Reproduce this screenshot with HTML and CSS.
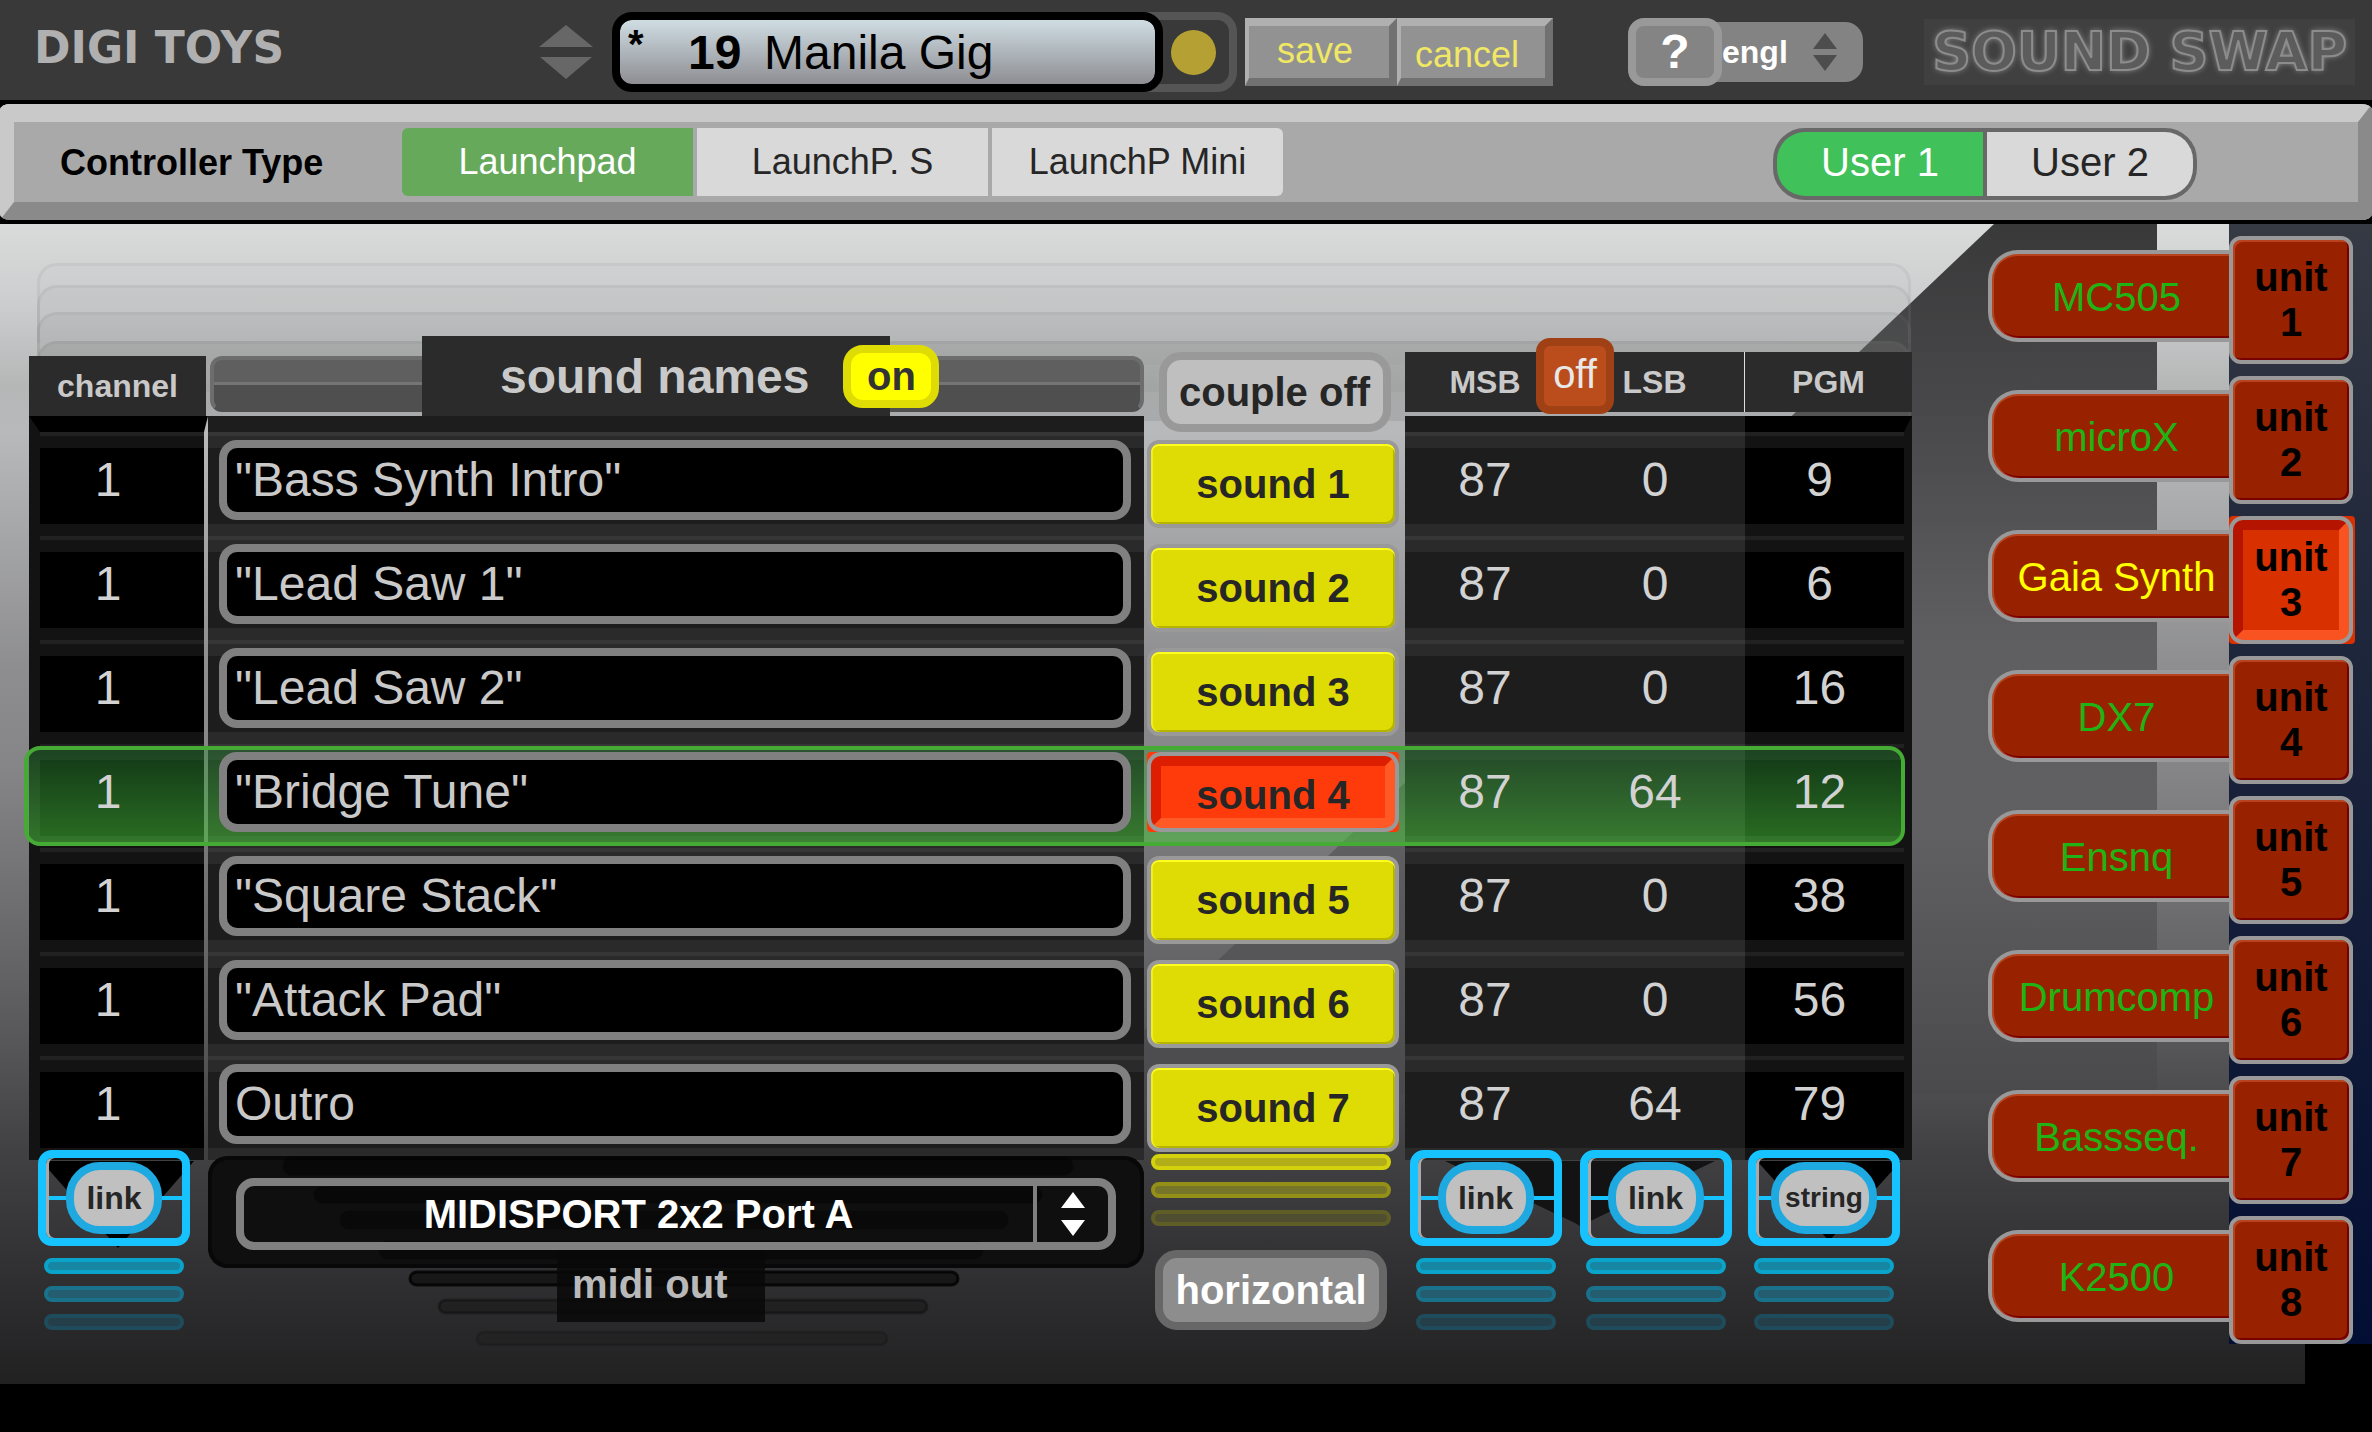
FILE: index.html
```html
<!DOCTYPE html>
<html lang="en">
<head>
  <meta charset="UTF-8" />
  <meta name="viewport" content="width=device-width, initial-scale=1" />
  <title>Sound Swap</title>
  <link rel="stylesheet" href="styles.css">
</head>
<body>
  <header class="topbar">
    <div class="brand">DIGI TOYS</div>

    <div class="stepper">
      <button type="button" aria-label="Previous preset"><svg viewBox="0 0 54 22"><path d="M27 0L54 22H0z"/></svg></button>
      <button type="button" aria-label="Next preset"><svg viewBox="0 0 54 22"><path d="M1 0H53L27 22z"/></svg></button>
    </div>

    <div class="preset">
      <div class="display">
        <span class="dirty">*</span>
        <label class="preset-no" for="presetName">19</label>
        <input type="text" id="presetName" value="Manila Gig">
      </div>
      <span class="lamp"></span>
    </div>

    <div class="actions">
      <button type="button" class="save">save</button>
      <button type="button" class="cancel">cancel</button>
    </div>

    <div class="help">
      <button type="button" class="help-btn" aria-label="Help">?</button>
      <div class="lang">
        <select aria-label="Language">
          <option>engl</option>
        </select>
        <svg viewBox="0 0 24 38"><path d="M12 0L24 16H0zM0 22H24L12 38z"/></svg>
      </div>
    </div>

    <div class="logo">SOUND SWAP</div>
  </header>

  <div class="toolbar">
    <div class="toolbar-inner">
      <span class="toolbar-label" id="typeLabel">Controller Type</span>
      <div class="segments" role="group" aria-labelledby="typeLabel">
        <button type="button" class="active">Launchpad</button>
        <button type="button">LaunchP. S</button>
        <button type="button">LaunchP Mini</button>
      </div>
      <div class="users" role="group" aria-label="User">
        <button type="button" class="active">User 1</button>
        <button type="button">User 2</button>
      </div>
    </div>
  </div>

  <main class="stage">
    <section class="board">
      <div class="stack stack-1"></div>
      <div class="stack stack-2"></div>
      <div class="stack stack-3"></div>
      <div class="stack stack-4"></div>

      <table class="sounds">
        <colgroup>
          <col class="col-channel"><col><col class="col-sound"><col class="col-msb"><col class="col-lsb"><col class="col-pgm">
        </colgroup>
        <thead>
          <tr>
            <th><div class="head head-channel">channel</div></th>
            <th>
              <div class="names-head">
                <div class="names-title">sound names <button type="button" class="on-btn">on</button></div>
              </div>
            </th>
            <th><button type="button" class="couple-btn">couple off</button></th>
            <th><div class="head head-bank">MSB</div></th>
            <th class="bank-cell"><div class="head head-bank head-lsb">LSB</div><button type="button" class="off-btn">off</button></th>
            <th><div class="head head-bank head-pgm">PGM</div></th>
          </tr>
        </thead>
        <tbody>
          <tr>
            <td class="channel"><span class="num">1</span></td>
            <td class="name"><input type="text" aria-label="Sound name 1" value="&quot;Bass Synth Intro&quot;"></td>
            <td class="sound"><button type="button">sound 1</button></td>
            <td class="bank"><span class="num">87</span></td>
            <td class="bank"><span class="num">0</span></td>
            <td class="pgm"><span class="num">9</span></td>
          </tr>
          <tr>
            <td class="channel"><span class="num">1</span></td>
            <td class="name"><input type="text" aria-label="Sound name 2" value="&quot;Lead Saw 1&quot;"></td>
            <td class="sound"><button type="button">sound 2</button></td>
            <td class="bank"><span class="num">87</span></td>
            <td class="bank"><span class="num">0</span></td>
            <td class="pgm"><span class="num">6</span></td>
          </tr>
          <tr>
            <td class="channel"><span class="num">1</span></td>
            <td class="name"><input type="text" aria-label="Sound name 3" value="&quot;Lead Saw 2&quot;"></td>
            <td class="sound"><button type="button">sound 3</button></td>
            <td class="bank"><span class="num">87</span></td>
            <td class="bank"><span class="num">0</span></td>
            <td class="pgm"><span class="num">16</span></td>
          </tr>
          <tr class="selected">
            <td class="channel"><span class="num">1</span></td>
            <td class="name"><input type="text" aria-label="Sound name 4" value="&quot;Bridge Tune&quot;"></td>
            <td class="sound"><button type="button"><span>sound 4</span></button></td>
            <td class="bank"><span class="num">87</span></td>
            <td class="bank"><span class="num">64</span></td>
            <td class="pgm"><span class="num">12</span></td>
          </tr>
          <tr>
            <td class="channel"><span class="num">1</span></td>
            <td class="name"><input type="text" aria-label="Sound name 5" value="&quot;Square Stack&quot;"></td>
            <td class="sound"><button type="button">sound 5</button></td>
            <td class="bank"><span class="num">87</span></td>
            <td class="bank"><span class="num">0</span></td>
            <td class="pgm"><span class="num">38</span></td>
          </tr>
          <tr>
            <td class="channel"><span class="num">1</span></td>
            <td class="name"><input type="text" aria-label="Sound name 6" value="&quot;Attack Pad&quot;"></td>
            <td class="sound"><button type="button">sound 6</button></td>
            <td class="bank"><span class="num">87</span></td>
            <td class="bank"><span class="num">0</span></td>
            <td class="pgm"><span class="num">56</span></td>
          </tr>
          <tr>
            <td class="channel"><span class="num">1</span></td>
            <td class="name"><input type="text" aria-label="Sound name 7" value="Outro"></td>
            <td class="sound"><button type="button">sound 7</button></td>
            <td class="bank"><span class="num">87</span></td>
            <td class="bank"><span class="num">64</span></td>
            <td class="pgm"><span class="num">79</span></td>
          </tr>
        </tbody>
      </table>

      <div class="footer">
        <div class="link-col">
          <svg class="arrow" viewBox="0 0 179 87" preserveAspectRatio="none"><path d="M12 0H165L89 87z" fill="#000"/></svg>
          <div class="link-box"><button type="button">link</button></div>
          <div class="bar cyan-1"></div>
          <div class="bar cyan-2"></div>
          <div class="bar cyan-3"></div>
        </div>

        <div class="midi">
          <div class="midi-panel">
            <div class="midi-select">
              <select id="midiOut">
                <option>MIDISPORT 2x2 Port A</option>
              </select>
              <span class="midi-arrows"><svg viewBox="0 0 24 44"><path d="M12 0L24 16H0zM0 28H24L12 44z"/></svg></span>
            </div>
          </div>
          <svg class="echo" viewBox="0 0 936 190" preserveAspectRatio="none">
            <g fill="#000" stroke="#000" stroke-width="3">
              <rect x="76" y="2" width="788" height="16" rx="8" opacity=".4"/>
              <rect x="107" y="32" width="726" height="14" rx="7" opacity=".4"/>
              <rect x="133" y="56" width="666" height="16" rx="8" opacity=".35"/>
              <rect x="172" y="86" width="602" height="16" rx="8" opacity=".35"/>
              <rect x="202" y="116" width="548" height="13" rx="7" fill-opacity=".5" stroke-opacity=".8"/>
              <rect x="231" y="144" width="488" height="13" rx="7" fill-opacity=".25" stroke-opacity=".3"/>
              <rect x="269" y="176" width="410" height="13" rx="7" fill-opacity=".1" stroke-opacity=".15"/>
            </g>
          </svg>
          <label class="midi-label" for="midiOut">midi out</label>
        </div>

        <div class="couple-col">
          <div class="bar yellow-1"></div>
          <div class="bar yellow-2"></div>
          <div class="bar yellow-3"></div>
          <button type="button" class="horizontal-btn">horizontal</button>
        </div>

        <div class="link-col">
          <svg class="arrow" viewBox="0 0 170 87" preserveAspectRatio="none"><path d="M40 0H170V62z" fill="#131313"/></svg>
          <div class="link-box"><button type="button">link</button></div>
          <div class="bar cyan-1"></div>
          <div class="bar cyan-2"></div>
          <div class="bar cyan-3"></div>
        </div>
        <div class="link-col">
          <svg class="arrow" viewBox="0 0 170 87" preserveAspectRatio="none"><path d="M0 0H140L5 65L0 62z" fill="#131313"/></svg>
          <div class="link-box"><button type="button">link</button></div>
          <div class="bar cyan-1"></div>
          <div class="bar cyan-2"></div>
          <div class="bar cyan-3"></div>
        </div>
        <div class="link-col">
          <svg class="arrow" viewBox="0 0 167 87" preserveAspectRatio="none"><path d="M12 0H156L84 80z" fill="#000"/></svg>
          <div class="link-box"><button type="button" class="string">string</button></div>
          <div class="bar cyan-1"></div>
          <div class="bar cyan-2"></div>
          <div class="bar cyan-3"></div>
        </div>
      </div>
    </section>

    <ul class="rack">
      <li><button type="button" class="device">MC505</button><button type="button" class="unit"><span>unit<br>1</span></button></li>
      <li><button type="button" class="device">microX</button><button type="button" class="unit"><span>unit<br>2</span></button></li>
      <li class="active"><button type="button" class="device">Gaia Synth</button><button type="button" class="unit"><span>unit<br>3</span></button></li>
      <li><button type="button" class="device">DX7</button><button type="button" class="unit"><span>unit<br>4</span></button></li>
      <li><button type="button" class="device">Ensnq</button><button type="button" class="unit"><span>unit<br>5</span></button></li>
      <li><button type="button" class="device">Drumcomp</button><button type="button" class="unit"><span>unit<br>6</span></button></li>
      <li><button type="button" class="device">Bassseq.</button><button type="button" class="unit"><span>unit<br>7</span></button></li>
      <li><button type="button" class="device">K2500</button><button type="button" class="unit"><span>unit<br>8</span></button></li>
    </ul>
  </main>
</body>
</html>
```
FILE: styles.css
```css
* { box-sizing: border-box; }
body {
  margin: 0;
  background: #000;
  color: #000;
  font-family: "Liberation Sans", Arial, sans-serif;
}
button, input, select {
  margin: 0;
  padding: 0;
  border: none;
  background: none;
  color: inherit;
  font: inherit;
}
button { cursor: pointer; }
select { appearance: none; }
svg { display: block; }

/* top bar */
.topbar {
  display: flex;
  align-items: center;
  padding: 12px 17px 8px 34px;
  background: #393939;
}
.brand {
  width: 505px;
  padding-bottom: 8px;
  font-family: "DejaVu Sans", sans-serif;
  font-weight: bold;
  font-size: 44px;
  line-height: 48px;
  color: #b0b0b0;
}
.stepper {
  display: flex;
  flex-direction: column;
  gap: 10px;
  width: 54px;
  margin-right: 19px;
}
.stepper svg {
  width: 54px;
  height: 22px;
  fill: #676767;
}
.preset {
  display: flex;
  width: 625px;
  height: 80px;
  border: 8px solid #555;
  border-radius: 20px;
  align-items: center;
  margin-right: 8px;
}
.display {
  display: flex;
  align-items: center;
  width: 551px;
  height: 80px;
  margin: -8px 8px -8px -8px;
  padding-left: 8px;
  border: 8px solid #000;
  border-radius: 20px;
  background: linear-gradient(#cfdde3, #8e8e93) padding-box;
  font-size: 48px;
}
.dirty {
  width: 60px;
  height: 60px;
  font-size: 40px;
  font-weight: bold;
}
.preset-no {
  width: 76px;
  font-weight: bold;
}
.display input {
  flex: 1;
  min-width: 0;
}
.lamp {
  width: 45px;
  height: 45px;
  border-radius: 50%;
  background: #b5a133;
}
.actions {
  display: flex;
  width: 308px;
  margin-right: 75px;
}
.actions button {
  flex: 1;
  height: 68px;
  border: 8px solid;
  border-left-width: 4px;
  border-color: #b0b0b0 #717171 #717171 #b0b0b0;
  background: #929292;
  font-size: 36px;
  line-height: 40px;
  color: #f0e765;
}
.actions .save {
  padding: 0 8px 2px 0;
}
.actions .cancel {
  padding: 6px 12px 0 0;
}
.help {
  display: flex;
  align-items: center;
}
.help-btn {
  position: relative;
  width: 94px;
  height: 68px;
  border: 8px solid #999;
  border-radius: 16px;
  background: #848484;
  color: #fff;
  font-weight: bold;
  font-size: 48px;
  line-height: 48px;
}
.lang {
  display: flex;
  align-items: center;
  width: 163px;
  height: 60px;
  margin-left: -22px;
  padding: 0 26px 0 22px;
  border-radius: 18px;
  background: #838383;
  color: #fff;
}
.lang select {
  flex: 1;
  min-width: 0;
  font-weight: bold;
  font-size: 32px;
  height: 44px;
}
.lang svg {
  width: 24px;
  height: 38px;
  fill: #4d4d4d;
}
.logo {
  margin-left: auto;
  padding: 0 8px;
  background: #404040;
  font-family: "DejaVu Sans", sans-serif;
  font-weight: bold;
  font-size: 54px;
  line-height: 66px;
  color: #5c5c5c;
  -webkit-text-stroke: 2px #8c8c8c;
  text-shadow: 0 0 6px #9a9a9a;
}

/* controller toolbar */
.toolbar {
  border: solid #000;
  border-width: 4px 0;
  border-radius: 10px;
  overflow: hidden;
}
.toolbar-inner {
  display: flex;
  align-items: flex-start;
  padding: 6px 161px 2px 46px;
  border: solid;
  border-width: 18px 14px;
  border-color: #c9c9c9 #8a8a8a #8a8a8a #c9c9c9;
  background: #a9a9a9;
}
.toolbar-label {
  width: 342px;
  font-weight: bold;
  font-size: 36px;
  line-height: 70px;
}
.segments {
  display: flex;
  gap: 4px;
}
.segments button {
  width: 291px;
  height: 68px;
  background: #d9d9d9;
  color: #262626;
  font-size: 36px;
}
.segments button:first-child { border-radius: 6px 0 0 6px; }
.segments button:last-child { border-radius: 0 6px 6px 0; }
.segments .active {
  background: #67a95b;
  color: #fff;
}
.users {
  display: flex;
  gap: 4px;
  width: 424px;
  height: 72px;
  margin-left: auto;
  border: 4px solid #686868;
  border-radius: 32px;
  background: #686868;
  overflow: hidden;
}
.users button {
  flex: 1;
  background: #d9d9d9;
  color: #262626;
  font-size: 40px;
  padding-bottom: 4px;
}
.users .active {
  background: #40c159;
  color: #fff;
}

/* stage */
.stage {
  position: relative;
  z-index: 0;
  display: flex;
  gap: 76px;
  padding: 12px 17px 40px 29px;
  background:
    linear-gradient(#363a43, #242b3d 25%, #020e33) right top / 143px calc(100% - 40px) no-repeat,
    linear-gradient(#d9dbda, #cccdce 7%, #b5b7b7 14%, #b8b9bb 18%, #8e8e90 38%, #858588 47%, #58585a 70%, #414144 80%, #212122) left top / calc(100% - 67px) 100% no-repeat;
}
.stage::before {
  content: "";
  position: absolute;
  z-index: -1;
  top: 0;
  right: 215px;
  width: 1080px;
  height: 870px;
  background: linear-gradient(#3a393a, #4b4b4d 25%, #5f5f61 48%, #606062 70%, #4a4a4d);
  clip-path: polygon(917px 0, 100% 0, 100% 100%, 0 100%);
}
.board {
  position: relative;
  flex: 1;
  min-width: 0;
  margin-top: 100px;
}
.stack {
  position: absolute;
  z-index: -1;
  left: 8px;
  right: 1px;
  height: 80px;
  border: 3px solid rgba(120, 122, 122, .1);
  border-bottom: none;
  border-radius: 20px 20px 0 0;
}
.stack-1 { top: -73px; background: rgba(125, 128, 128, .02); }
.stack-2 { top: -51px; background: rgba(125, 125, 125, .06); }
.stack-3 { top: -24px; background: rgba(125, 125, 125, .1); }
.stack-4 { top: 5px; background: rgba(125, 125, 125, .22); }

/* sound table */
.sounds {
  width: 100%;
  table-layout: fixed;
  border-collapse: separate;
  border-spacing: 0;
}
.col-channel { width: 179px; }
.col-sound { width: 261px; }
.col-msb, .col-lsb { width: 170px; }
.col-pgm { width: 167px; }
.sounds th {
  height: 80px;
  padding: 0;
  vertical-align: bottom;
}
.head {
  height: 60px;
  background: #2b2b2b;
  color: #c9c9c9;
  font-size: 32px;
  line-height: 60px;
}
.head-channel { margin-right: 2px; }
.head-bank {
  margin-bottom: 4px;
  padding-right: 10px;
}
.head-lsb { border-right: 1px solid #ddd; }
.head-pgm { padding-right: 0; }
.names-head {
  position: relative;
  height: 80px;
}
.names-head::before {
  content: "";
  position: absolute;
  inset: 20px 0 4px 2px;
  border: 4px solid #6d6d6d;
  border-bottom-color: #4f4f4f;
  border-radius: 12px;
  background: linear-gradient(#5f5f5f 22px, #757575 22px, #757575 25px, #4f4f4f 25px);
}
.names-title {
  position: relative;
  display: flex;
  align-items: center;
  gap: 34px;
  width: 468px;
  height: 80px;
  margin-left: 214px;
  padding-left: 78px;
  background: #2b2b2b;
  color: #c9c9c9;
  font-size: 48px;
  white-space: nowrap;
}
.on-btn {
  flex: none;
  width: 96px;
  height: 63px;
  border: 8px solid #dedb05;
  border-radius: 20px;
  background: #ff0;
  color: #333;
  font-size: 40px;
  line-height: 44px;
}
.couple-btn, .horizontal-btn {
  width: 232px;
  height: 80px;
  border: 8px solid #999;
  border-radius: 22px;
  background: #bfbfbf;
  color: #262626;
  font-weight: bold;
  font-size: 40px;
  white-space: nowrap;
}
.couple-btn {
  position: relative;
  display: block;
  margin: 0 auto -16px;
}
.bank-cell { position: relative; }
.off-btn {
  position: absolute;
  left: -39px;
  top: 2px;
  width: 78px;
  height: 76px;
  border: 8px solid #a04015;
  border-radius: 14px;
  background: #bb4d1c;
  color: #e8e8e8;
  font-size: 40px;
  font-weight: normal;
  padding-bottom: 4px;
}
.sounds td {
  height: 104px;
  padding: 8px 0;
  vertical-align: top;
  text-align: center;
}
.sounds tbody tr { position: relative; }
.sounds .channel, .sounds .pgm {
  background: linear-gradient(#212121 4px, #131313 4px, #131313 16px, #000 16px, #000 92px, #131313 92px) padding-box;
}
.sounds .channel {
  border-left: 11px solid #131313;
  border-right: 4px solid transparent;
}
.sounds .pgm { border-right: 8px solid #131313; }
.sounds .name, .sounds .bank {
  background: linear-gradient(#363636 4px, #2a2a2a 4px, #2a2a2a 16px, #1d1d1d 16px, #1d1d1d 92px, #2a2a2a 92px) padding-box;
}
.sounds tbody tr:first-child td { border-top: 16px solid transparent; }
.sounds tbody tr:first-child .channel,
.sounds tbody tr:first-child .pgm { border-top-color: #000; }
.sounds tbody tr:first-child .name,
.sounds tbody tr:first-child .bank { border-top-color: #1d1d1d; }
.num {
  position: relative;
  z-index: 1;
  display: block;
  padding-right: 10px;
  color: #d2d2d2;
  font-size: 48px;
  line-height: 80px;
}
.channel .num { padding-right: 28px; }
.sounds .name {
  padding-left: 11px;
  padding-right: 13px;
}
.name input {
  position: relative;
  z-index: 1;
  display: block;
  width: 100%;
  height: 80px;
  padding: 0 8px 2px;
  border: 8px solid #808080;
  border-radius: 18px;
  background: #000;
  color: #c9c9c9;
  font-size: 48px;
}
.sound button {
  position: relative;
  z-index: 1;
  display: block;
  width: 252px;
  height: 88px;
  margin-left: 3px;
  border: 4px solid #999;
  border-radius: 12px;
  background: #dedb05;
  box-shadow: inset 0 2px #ffff1f, inset 2px 0 #f2ef12, inset -2px -2px #b7b400;
  color: #262626;
  font-weight: bold;
  font-size: 40px;
}
/* spans the whole row, the row is its containing block */
.selected .channel::before {
  content: "";
  position: absolute;
  inset: 2px 7px 2px -5px;
  border: 4px solid #45ab34;
  border-radius: 16px;
  background: linear-gradient(rgba(45, 140, 57, .4), rgba(76, 198, 62, .55));
}
.selected .sound button {
  height: 80px;
  border: none;
  border-radius: 4px;
  background: #ff3b0b;
  box-shadow: none;
}
.selected .sound button::before {
  content: "";
  position: absolute;
  inset: 0;
  border: 4px solid #999;
  border-radius: 14px;
}
.selected .sound span {
  display: block;
  height: 72px;
  margin: 0 4px;
  border: 10px solid;
  border-radius: 8px;
  border-color: #de1e00 #ff5a26 #ff5a26 #de1e00;
  line-height: 58px;
}

/* row under the table */
.footer {
  position: relative;
  display: grid;
  grid-template-columns: 179px 1fr 261px 170px 170px 167px;
  align-items: start;
  margin-top: -10px;
}
.link-col {
  position: relative;
  display: flex;
  flex-direction: column;
  align-items: center;
  gap: 12px;
  padding-right: 9px;
}
.arrow {
  position: absolute;
  top: 11px;
  left: 0;
  width: 100%;
  height: 87px;
}
.link-box {
  position: relative;
  display: flex;
  align-items: center;
  justify-content: center;
  width: 152px;
  height: 96px;
  border: 8px solid #17c3ff;
  border-radius: 14px;
  background: linear-gradient(#17c3ff, #17c3ff) center / 100% 4px no-repeat;
  box-shadow: inset 3px 0 #aaa;
}
.link-box button {
  width: 96px;
  height: 72px;
  border: 8px solid #1ea9e1;
  border-radius: 34px;
  background: #c0c0c0;
  color: #262626;
  font-weight: bold;
  font-size: 32px;
}
.link-box .string {
  width: 106px;
  font-size: 28px;
}
.bar {
  width: 140px;
  height: 16px;
  border: 4px solid;
  border-radius: 8px;
}
.cyan-1 { background: #1786a3; border-color: #0aa3c9; }
.cyan-2 { background: #235d6f; border-color: #1a718b; }
.cyan-3 { background: #253f4a; border-color: #1f4c5c; }
.couple-col {
  display: flex;
  flex-direction: column;
  gap: 12px;
  align-items: center;
  padding: 4px 7px 0 0;
}
.couple-col .bar { width: 240px; }
.yellow-1 { background: #b2ae1a; border-color: #d4d10d; }
.yellow-2 { background: #77752a; border-color: #949017; }
.yellow-3 { background: #504e30; border-color: #605e27; }
.horizontal-btn {
  margin-top: 12px;
  border-color: #676767;
  background: #8d8d8d;
  color: #fff;
}
.midi {
  position: relative;
  margin-top: 6px;
}
.midi-panel {
  padding: 22px 28px 18px;
  border-radius: 20px;
  background: #0f0f0f;
  box-shadow: inset 0 0 0 4px #080808;
}
.echo {
  position: absolute;
  top: 0;
  left: 0;
  width: 100%;
  height: 190px;
}
.midi-select {
  position: relative;
  z-index: 1;
  display: flex;
  height: 72px;
  border: 8px solid #808080;
  border-radius: 18px;
  color: #fff;
}
.midi-select select {
  flex: 1;
  min-width: 0;
  font-weight: bold;
  font-size: 40px;
  text-align: center;
  text-align-last: center;
}
.midi-arrows {
  display: flex;
  align-items: center;
  justify-content: center;
  width: 75px;
  border-left: 4px solid #808080;
}
.midi-arrows svg {
  width: 24px;
  height: 44px;
  fill: #fff;
}
.midi-label {
  position: relative;
  display: block;
  width: 208px;
  height: 72px;
  margin: -18px auto 0 349px;
  background: rgba(8, 8, 8, .85);
  color: #b9b9b9;
  font-weight: bold;
  font-size: 40px;
  line-height: 68px;
  padding-left: 15px;
}

/* unit rack */
.rack {
  display: flex;
  flex-direction: column;
  gap: 12px;
  width: 367px;
  margin: 0;
  padding: 0;
  list-style: none;
}
.rack li {
  display: flex;
  align-items: flex-start;
  height: 128px;
}
.device {
  width: 241px;
  height: 92px;
  margin-top: 14px;
  padding: 2px 0 0 12px;
  border: 4px solid #999;
  border-right: none;
  border-radius: 30px 0 0 30px;
  background: #982200;
  box-shadow: inset 0 2px #b9431f, inset 2px 0 #b9431f, inset 0 -2px #780000;
  color: #1fb414;
  font-size: 40px;
  white-space: nowrap;
}
.unit {
  position: relative;
  width: 124px;
  height: 128px;
  border: 4px solid #999;
  border-radius: 12px;
  background: #982200;
  box-shadow: inset 2px 2px #b9431f, inset -2px -2px #780000;
  font-weight: bold;
  font-size: 40px;
  line-height: 45px;
}
.active .device { color: #ff0; }
.active .unit {
  width: 126px;
  border: none;
  border-radius: 4px;
  background: #d93000;
  box-shadow: none;
}
.active .unit::before {
  content: "";
  position: absolute;
  inset: 0 2px 0 0;
  border: 4px solid #999;
  border-radius: 14px;
}
.active .unit span {
  display: block;
  height: 120px;
  margin: 0 6px 0 4px;
  padding-top: 5px;
  border: 10px solid;
  border-radius: 8px;
  border-color: #b51500 #f95322 #f95322 #b51500;
}
```
